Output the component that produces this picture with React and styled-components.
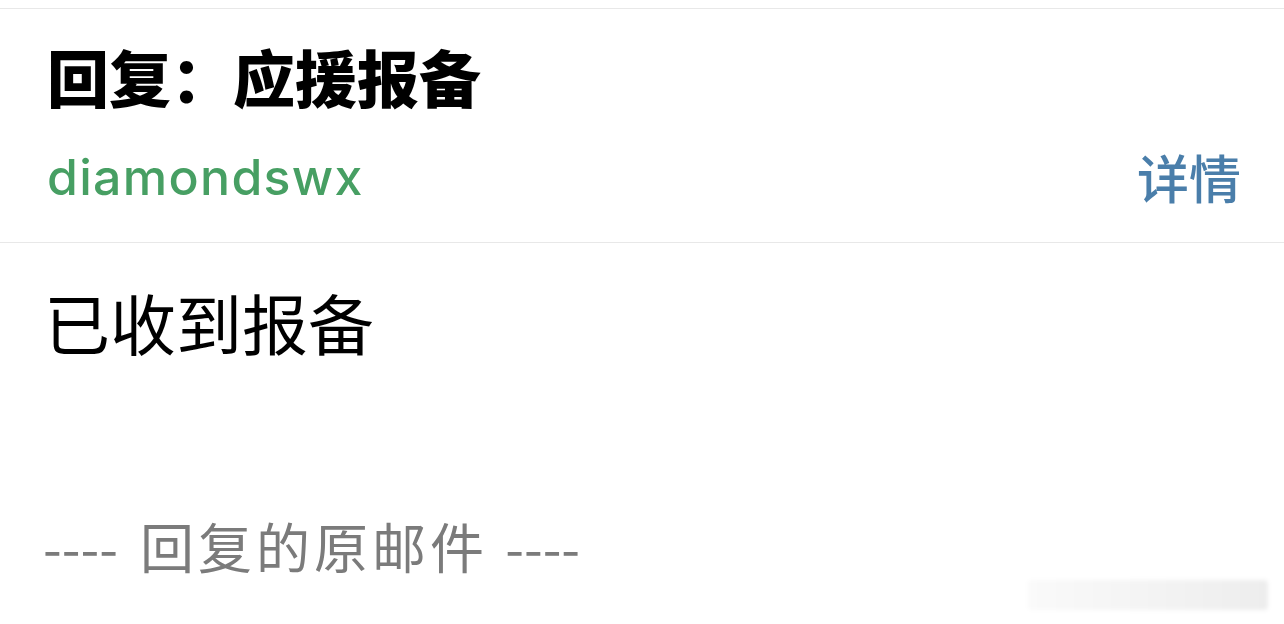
import React from "react";
import styled, { createGlobalStyle } from "styled-components";

const GlobalStyle = createGlobalStyle`
  html, body {
    margin: 0;
    padding: 0;
    background: #fff;
  }
  body {
    font-family: "Noto Sans CJK SC", "Noto Sans", sans-serif;
  }
`;

const Page = styled.div`
  position: relative;
  width: 1284px;
  height: 624px;
  padding-top: 8px;
  box-sizing: border-box;
  overflow: hidden;
  background: #fff;
`;

const Header = styled.header`
  border-top: 1px solid #e8e8e8;
  border-bottom: 1px solid #e8e8e8;
  padding: 31px 43px 35px 47px;
`;

const Subject = styled.h1`
  margin: 0;
  font-size: 62px;
  line-height: 72px;
  font-weight: 900;
  color: #000;
`;

const MetaRow = styled.div`
  display: flex;
  align-items: flex-start;
  justify-content: space-between;
  margin-top: 35px;
  height: 60px;
`;

const Sender = styled.span`
  font-family: Inter, "Liberation Sans", sans-serif;
  font-size: 50px;
  line-height: 60px;
  font-weight: 500;
  letter-spacing: 1.3px;
  color: #479f63;
`;

const DetailLink = styled.a`
  font-size: 52px;
  line-height: 60px;
  font-weight: 500;
  color: #4a7eaa;
  text-decoration: none;
`;

const Body = styled.div`
  padding: 38px 44px 0;
`;

const Message = styled.p`
  margin: 0;
  font-size: 66px;
  line-height: 80px;
  color: #000;
`;

const QuoteMark = styled.p`
  margin: 155px 0 0 -1px;
  font-size: 54px;
  line-height: 60px;
  word-spacing: 10px;
  color: #7b7b7b;
`;

const QuoteLabel = styled.span`
  letter-spacing: 4px;
  margin-right: -5px;
`;

const Watermark = styled.div`
  position: absolute;
  right: 16px;
  bottom: 14px;
  width: 240px;
  height: 30px;
  border-radius: 4px;
  background: linear-gradient(90deg, rgba(0,0,0,0.02), rgba(0,0,0,0.07));
  filter: blur(2px);
`;

export default function App() {
  return (
    <Page>
      <GlobalStyle />
      <Header>
        <Subject>回复：应援报备</Subject>
        <MetaRow>
          <Sender>diamondswx</Sender>
          <DetailLink href="#">详情</DetailLink>
        </MetaRow>
      </Header>
      <Body>
        <Message>已收到报备</Message>
        <QuoteMark>
          ---- <QuoteLabel>回复的原邮件</QuoteLabel> ----
        </QuoteMark>
      </Body>
      <Watermark />
    </Page>
  );
}
